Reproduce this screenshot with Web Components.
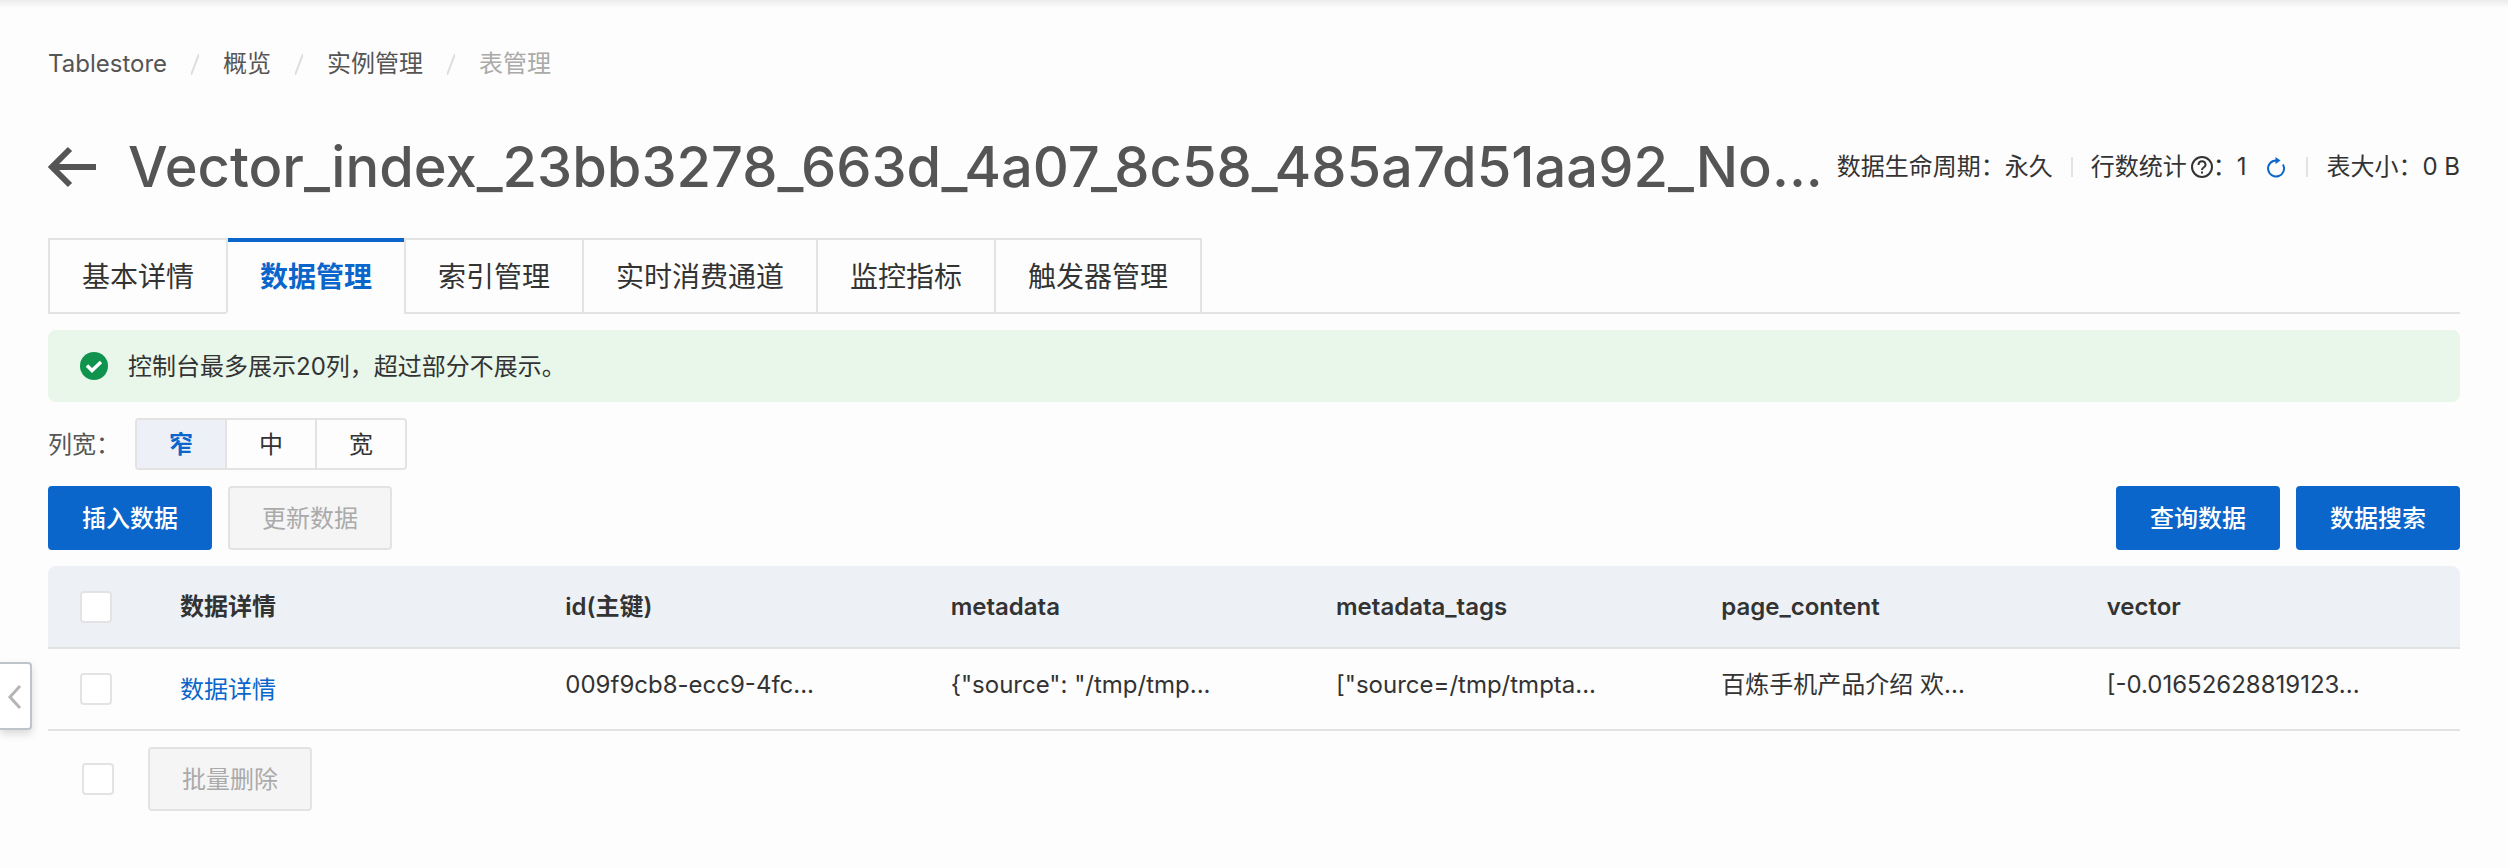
<!DOCTYPE html>
<html lang="zh-CN">
<head>
<meta charset="utf-8">
<title>Tablestore 表管理</title>
<style>
  html { --blue: #0a66ca; --line: #e3e3e3; --text: #333; --muted: #555; --off: #aaa; }
  body { margin: 0; min-height: 100vh; background: #fdfdfd; color: var(--text);
    font: 24px/32px Inter, "Noto Sans CJK SC", sans-serif; }
</style>
</head>
<body>
<table-page></table-page>
<script>
const define = (name, html, setup) => {
  const template = document.createElement('template');
  template.innerHTML = '<style>*{box-sizing:border-box}</style>' + html;
  customElements.define(name, class extends HTMLElement {
    constructor() {
      super();
      this.attachShadow({ mode: 'open' }).append(template.content.cloneNode(true));
    }
    connectedCallback() { if (setup) setup(this, this.shadowRoot); }
  });
};

define('crumb-trail', `
<style>
  :host { display: block; }
  nav { display: flex; gap: 24px; }
  ::slotted(a) { color: var(--muted); text-decoration: none; }
  ::slotted(svg) { width: 8px; height: 32px; fill: none; stroke: #ddd; stroke-width: 2; }
  ::slotted(span) { color: var(--off); }
</style>
<nav aria-label="breadcrumb"><slot></slot></nav>`);

define('page-title', `
<style>
  :host { display: flex; align-items: center; justify-content: space-between; gap: 24px; height: 72px; }
  .name { display: flex; align-items: center; gap: 32px; min-width: 0; color: var(--muted); }
  a { display: flex; color: inherit; }
  svg { width: 48px; height: 48px; fill: none; stroke: currentColor; stroke-width: 6; }
  h1 { margin: 0; font-size: 56px; line-height: 72px; font-weight: 500; white-space: nowrap; }
</style>
<div class="name">
  <a href="#back" aria-label="返回"><svg viewBox="0 0 48 48"><path d="M48 24H5M22 6 4 24l18 18"/></svg></a>
  <h1><slot></slot></h1>
</div>
<slot name="info"></slot>`);

define('table-stats', `
<style>
  :host { display: flex; align-items: center; flex: none; gap: 18px; white-space: nowrap; }
  i { width: 2px; height: 20px; background: var(--line); }
  span { display: flex; align-items: center; }
  svg { display: block; fill: none; stroke: currentColor; stroke-width: 2; }
  .help { width: 22px; height: 22px; margin-left: 4px; }
  button { padding: 0; margin: 0 2px 0 20px; border: 0; background: none; color: var(--blue); }
  .reload { width: 20px; height: 24px; }
</style>
<span>数据生命周期：永久</span><i></i>
<span>行数统计<svg class="help" viewBox="0 0 22 22"><circle cx="11" cy="11" r="10"/><path d="M7.500 9c0-5 7-5 7 0 0 2.500-3.500 2-3.500 5M11 15.500v2"/></svg>：1
<button aria-label="刷新"><svg class="reload" viewBox="0 0 20 24"><path d="M17 9.500A8 8 0 1 1 10 5.500"/><path d="M9.500 2l5 3.500-5 3.500z" fill="currentColor" stroke="none"/></svg></button></span><i></i>
<span>表大小：0 B</span>`);

define('tab-bar', `
<style>
  :host { display: flex; height: 76px; }
  .rest { flex: 1; border-bottom: 2px solid var(--line); }
</style>
<slot></slot><div class="rest"></div>`);

define('tab-item', `
<style>
  :host { display: block; }
  button { height: 76px; padding: 2px 32px 0; border: 2px solid var(--line); border-right-width: 0;
    background: none; color: var(--text); font: inherit; font-size: 28px; line-height: 36px; }
  :host(:last-of-type) button { border-right-width: 2px; }
  :host([active]) button { position: relative; border-bottom-color: transparent; color: var(--blue); font-weight: 700; }
  :host([active]) button::before { content: ""; position: absolute; top: -2px; left: 0; right: 0;
    height: 4px; background: var(--blue); }
</style>
<button role="tab"><slot></slot></button>`);

define('notice-bar', `
<style>
  :host { display: flex; align-items: center; gap: 20px; height: 72px; padding: 0 32px;
    border-radius: 8px; background: #e8f7ea; }
  svg { width: 28px; height: 28px; }
  span { padding-top: 2px; }
</style>
<svg viewBox="0 0 28 28"><circle cx="14" cy="14" r="14" fill="#10934d"/><path d="m7 13.500 5 5 9-8.500" fill="none" stroke="#fff" stroke-width="3.500"/></svg>
<span><slot></slot></span>`);

define('width-picker', `
<style>
  :host { display: block; }
  fieldset { display: flex; align-items: center; margin: 0; padding: 0; border: 0; min-width: 0; }
  .title { width: 87px; padding-top: 2px; color: var(--muted); }
  .set { display: flex; width: 272px; height: 52px; border: 2px solid var(--line); border-radius: 4px; overflow: hidden; }
  label { position: relative; flex: 1; padding: 10px 0; text-align: center; line-height: 30px; }
  label + label { border-left: 2px solid var(--line); }
  input { position: absolute; inset: 0; margin: 0; opacity: 0; }
  label:has(:checked) { background: #edf1f7; color: var(--blue); font-weight: 700; }
</style>
<fieldset aria-label="列宽"><span class="title">列宽：</span>
<div class="set">
<label><input type="radio" name="w" checked>窄</label><label><input type="radio" name="w">中</label><label><input type="radio" name="w">宽</label>
</div></fieldset>`);

define('action-button', `
<style>
  :host { display: block; }
  button { display: block; height: 64px; padding: 2px 32px 0; border: 2px solid var(--blue); border-radius: 4px;
    background: var(--blue); color: #fff; font: inherit; font-weight: 500; }
  button:disabled { border-color: var(--line); background: #f5f5f5; color: var(--off); font-weight: 400; }
</style>
<button><slot></slot></button>`, (host, root) => {
  root.querySelector('button').disabled = host.hasAttribute('disabled');
});

define('check-box', `
<style>
  :host { display: block; width: 32px; height: 32px; }
  input { display: block; appearance: none; width: 32px; height: 32px; margin: 0;
    border: 2px solid var(--line); border-radius: 4px; background: #fff; }
</style>
<input type="checkbox">`, (host, root) => {
  root.querySelector('input').setAttribute('aria-label', host.getAttribute('label'));
});

define('data-grid', `
<style>
  :host { display: block; }
  table { width: 100%; table-layout: fixed; border-collapse: separate; border-spacing: 0; }
  th, td { padding: 0 32px; border-bottom: 2px solid var(--line); text-align: left; white-space: nowrap; }
  th { height: 83px; background: #edf1f6; font-weight: 600; }
  td { height: 82px; padding-bottom: 8px; }
  td:nth-child(-n+2) { padding-bottom: 0; }
  th:first-child { width: 100px; border-top-left-radius: 8px; }
  th:last-child { border-top-right-radius: 8px; }
  a { display: block; padding-top: 2px; color: var(--blue); text-decoration: none; }
</style>
<table>
<thead><tr><th><check-box label="全选"></check-box></th><th>数据详情</th><th>id(主键)</th><th>metadata</th><th>metadata_tags</th><th>page_content</th><th>vector</th></tr></thead>
<tbody><tr><td><check-box label="选择行"></check-box></td><td><a href="#detail">数据详情</a></td><td>009f9cb8-ecc9-4fc...</td><td>{"source": "/tmp/tmp...</td><td>["source=/tmp/tmpta...</td><td>百炼手机产品介绍 欢...</td><td>[-0.01652628819123...</td></tr></tbody>
</table>`);

define('side-handle', `
<style>
  :host { position: absolute; left: 0; top: 662px; }
  button { display: flex; align-items: center; width: 32px; height: 68px; padding: 2px 0 0 7px;
    border: 2px solid #bfc4ca; border-left: 0; border-radius: 0 4px 4px 0; background: #fff;
    box-shadow: 0 4px 8px rgba(0,0,0,.15); color: #b5b5b5; }
  svg { width: 16px; height: 26px; fill: none; stroke: currentColor; stroke-width: 3; }
</style>
<button aria-label="展开侧栏"><svg viewBox="0 0 16 26"><path d="M13 2 3 13l10 11"/></svg></button>`);

define('table-page', `
<style>
  :host { display: block; position: relative; }
  .edge { height: 8px; background: linear-gradient(#ebebeb, #fdfdfd); }
  main { padding: 40px 48px 48px; }
  page-title { margin: 51px 0 35px; }
  notice-bar, width-picker, .bar, data-grid, .foot { margin-top: 16px; }
  .bar, .foot { display: flex; gap: 16px; }
  .push { margin-left: auto; }
  .foot { align-items: center; gap: 34px; padding-left: 34px; }
</style>
<div class="edge"></div>
<main>
  <crumb-trail>
    <a href="#home">Tablestore</a><svg viewBox="0 0 8 32"><path d="M0 27 8 6"/></svg>
    <a href="#overview">概览</a><svg viewBox="0 0 8 32"><path d="M0 27 8 6"/></svg>
    <a href="#instances">实例管理</a><svg viewBox="0 0 8 32"><path d="M0 27 8 6"/></svg>
    <span>表管理</span>
  </crumb-trail>
  <page-title>Vector_index_23bb3278_663d_4a07_8c58_485a7d51aa92_No...<table-stats slot="info"></table-stats></page-title>
  <tab-bar><tab-item>基本详情</tab-item><tab-item active>数据管理</tab-item><tab-item>索引管理</tab-item><tab-item>实时消费通道</tab-item><tab-item>监控指标</tab-item><tab-item>触发器管理</tab-item></tab-bar>
  <notice-bar>控制台最多展示20列，超过部分不展示。</notice-bar>
  <width-picker></width-picker>
  <div class="bar">
    <action-button>插入数据</action-button><action-button disabled>更新数据</action-button>
    <action-button class="push">查询数据</action-button><action-button>数据搜索</action-button>
  </div>
  <data-grid></data-grid>
  <div class="foot"><check-box label="全选"></check-box><action-button disabled>批量删除</action-button></div>
</main>
<side-handle></side-handle>`);
</script>
</body>
</html>
